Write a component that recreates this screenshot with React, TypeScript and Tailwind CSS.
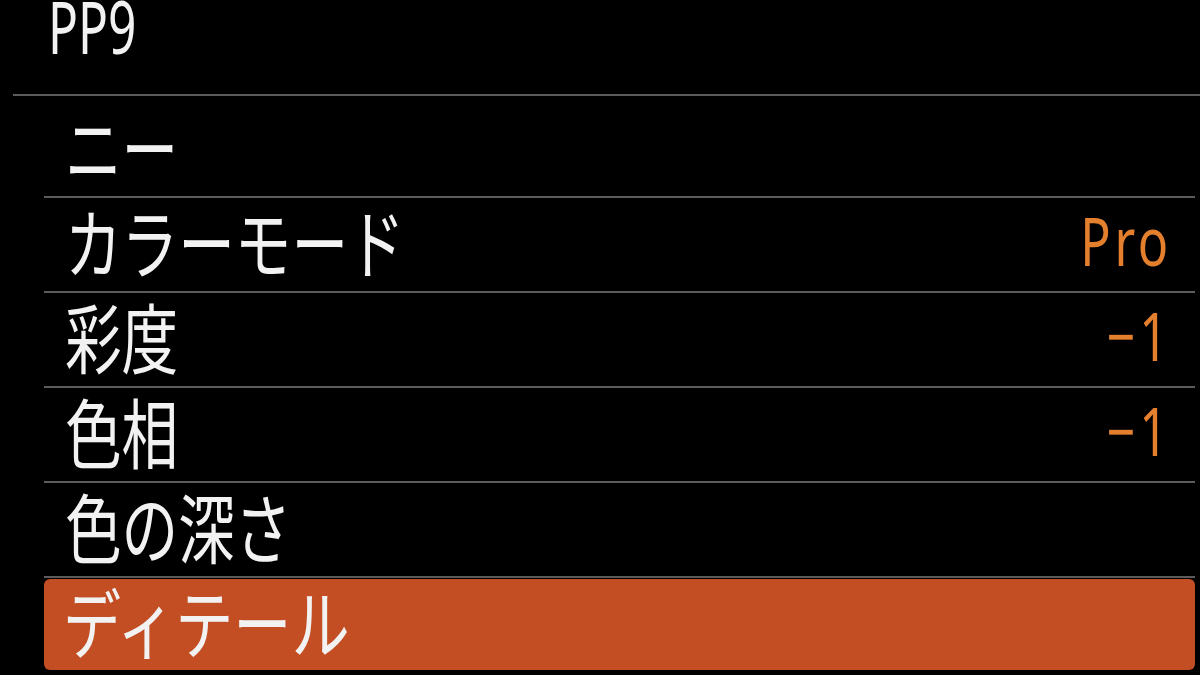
import React from "react";

type Item = { label: string; value?: string };

const items: Item[] = [
  { label: "ニー" },
  { label: "カラーモード", value: "Pro" },
  { label: "彩度", value: "−1" },
  { label: "色相", value: "−1" },
  { label: "色の深さ" },
];

const jp = { fontFamily: '"Noto Sans CJK JP", "Noto Sans", sans-serif' };
const latin = { fontFamily: '"Noto Sans", "Liberation Sans", sans-serif' };

const Row: React.FC<{ item: Item }> = ({ item }) => (
  <div className="h-[95px] border-b-2 border-[#5c5c5c] flex items-center justify-between pl-[21px] pr-[23px] pb-[10px]">
    <span
      className="inline-block origin-left scale-x-[0.745] text-[76px] leading-[76px] text-[#f2f2f2] whitespace-nowrap"
      style={jp}
    >
      {item.label}
    </span>
    {item.value && (
      <span
        className="inline-block origin-right scale-x-[0.74] text-[68px] leading-[68px] text-[#e47f2e] tracking-[5px]"
        style={latin}
      >
        {item.value}
      </span>
    )}
  </div>
);

export default function App() {
  return (
    <div className="w-[1200px] h-[675px] bg-black overflow-hidden">
      <div className="h-[94px] pl-[48px]">
        <span
          className="inline-block origin-left scale-x-[0.68] text-[73px] leading-[52px] text-[#f2f2f2]"
          style={latin}
        >
          PP9
        </span>
      </div>
      <div className="ml-[13px] h-[2px] bg-[#5c5c5c]" />
      <div className="ml-[44px] mr-[5px] mt-[7px]">
        {items.map((it) => (
          <Row key={it.label} item={it} />
        ))}
        <div className="mt-[1px] h-[91px] rounded-[6px] bg-[#c34e23] flex items-center pl-[19px] pb-[9px]">
          <span
            className="inline-block origin-left scale-x-[0.765] text-[76px] leading-[76px] text-[#f2f2f2] whitespace-nowrap"
            style={jp}
          >
            ディテール
          </span>
        </div>
      </div>
    </div>
  );
}
